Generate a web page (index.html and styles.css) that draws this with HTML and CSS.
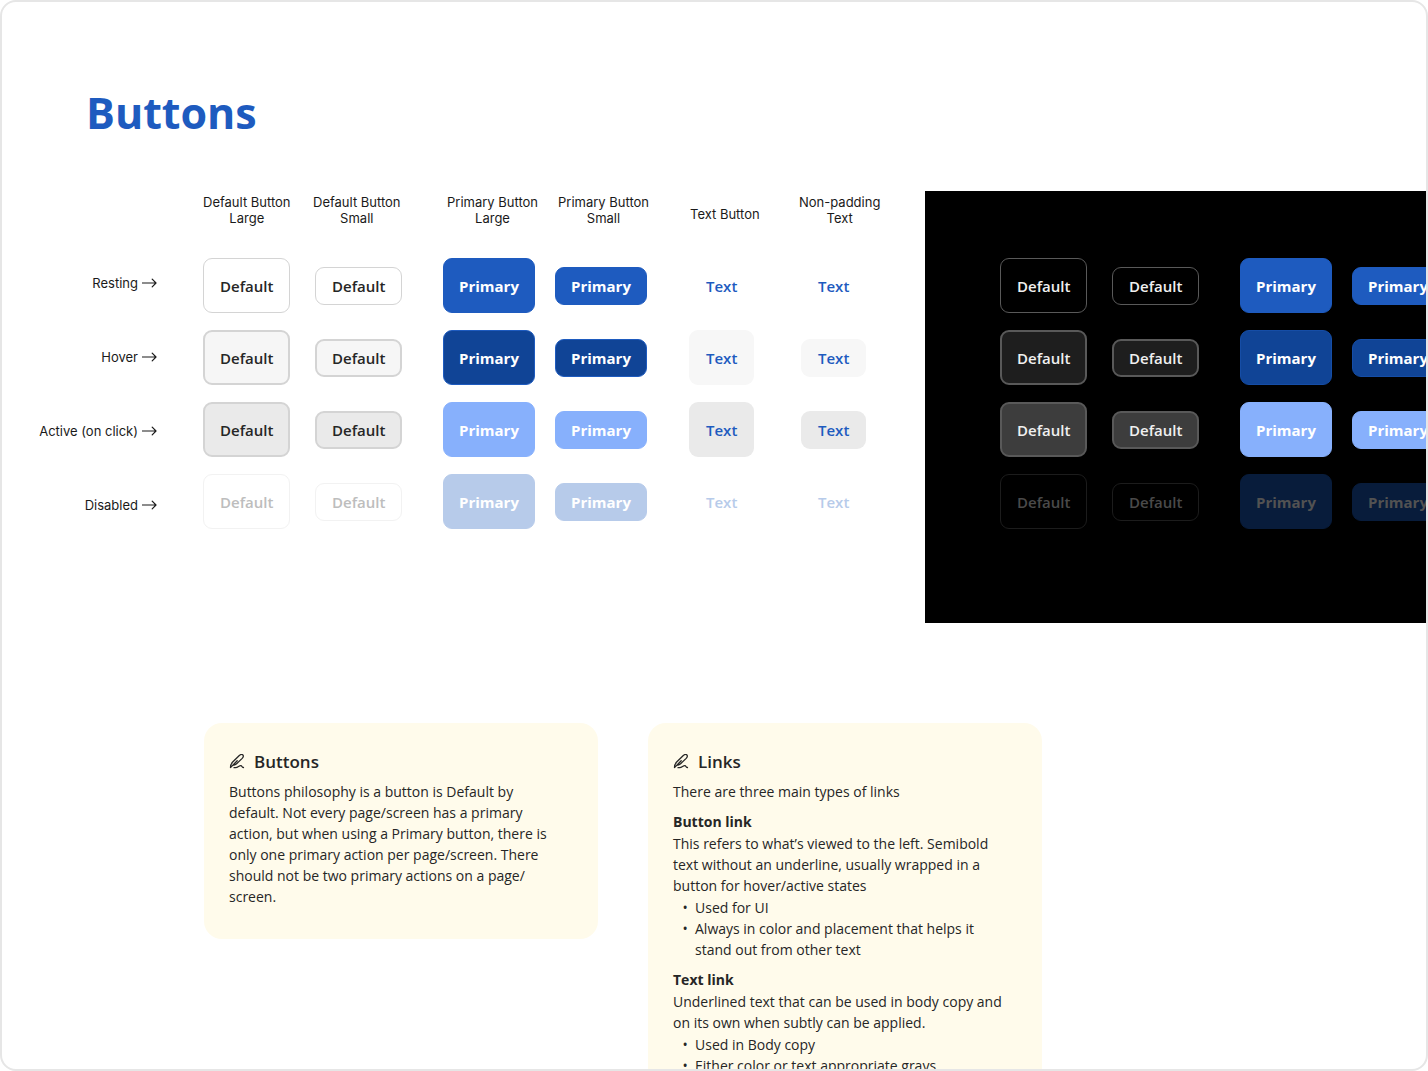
FILE: index.html
```html
<!DOCTYPE html>
<html lang="en">
<head>
<meta charset="utf-8">
<meta name="viewport" content="width=device-width, initial-scale=1">
<title>Buttons</title>
<link rel="stylesheet" href="styles.css">
</head>
<body>
<svg width="0" height="0" class="defs" aria-hidden="true">
  <symbol id="arrow" viewBox="0 0 15 10"><path d="M.5 5h13.500M10.200 1.200 14 5l-3.800 3.800"/></symbol>
  <symbol id="pen" viewBox="0 0 16 16"><path d="M1.500 13.600C1.500 11.400 2.300 9.400 3.900 7.800L10.300 1.500C11.500.5 13.200.3 13.900 1 14.700 1.800 14.300 3.300 13.200 4.400L7.600 9.700C6.300 10.900 4.900 11.300 3.500 11.400M1.500 13.600 8.200 6.700M5 13.700H6.600C9 13.700 9.900 11.600 11.800 11.600 13.300 11.600 12.600 13.700 14.500 13.500"/></symbol>
</svg>
<main class="sheet">
  <h1 class="title">Buttons</h1>

  <section class="board">
    <div class="states">
      <span>Resting <svg class="arrow" aria-hidden="true"><use href="#arrow"/></svg></span>
      <span>Hover <svg class="arrow" aria-hidden="true"><use href="#arrow"/></svg></span>
      <span>Active (on click) <svg class="arrow" aria-hidden="true"><use href="#arrow"/></svg></span>
      <span>Disabled <svg class="arrow" aria-hidden="true"><use href="#arrow"/></svg></span>
    </div>

    <div class="light">
      <div class="heads">
        <span>Default Button<br>Large</span>
        <span>Default Button<br>Small</span>
        <span>Primary Button<br>Large</span>
        <span>Primary Button<br>Small</span>
        <span class="single">Text Button</span>
        <span>Non-padding<br>Text</span>
      </div>
      <div class="matrix">
        <button class="btn default large">Default</button>
        <button class="btn default">Default</button>
        <button class="btn primary large">Primary</button>
        <button class="btn primary">Primary</button>
        <button class="btn text large">Text</button>
        <button class="btn text">Text</button>

        <button class="btn default large is-hover">Default</button>
        <button class="btn default is-hover">Default</button>
        <button class="btn primary large is-hover">Primary</button>
        <button class="btn primary is-hover">Primary</button>
        <button class="btn text large is-hover">Text</button>
        <button class="btn text is-hover">Text</button>

        <button class="btn default large is-active">Default</button>
        <button class="btn default is-active">Default</button>
        <button class="btn primary large is-active">Primary</button>
        <button class="btn primary is-active">Primary</button>
        <button class="btn text large is-active">Text</button>
        <button class="btn text is-active">Text</button>

        <button class="btn default large" disabled>Default</button>
        <button class="btn default" disabled>Default</button>
        <button class="btn primary large" disabled>Primary</button>
        <button class="btn primary" disabled>Primary</button>
        <button class="btn text large" disabled>Text</button>
        <button class="btn text" disabled>Text</button>
      </div>
    </div>

    <div class="dark">
      <div class="matrix">
        <button class="btn default large">Default</button>
        <button class="btn default">Default</button>
        <button class="btn primary large">Primary</button>
        <button class="btn primary">Primary</button>

        <button class="btn default large is-hover">Default</button>
        <button class="btn default is-hover">Default</button>
        <button class="btn primary large is-hover">Primary</button>
        <button class="btn primary is-hover">Primary</button>

        <button class="btn default large is-active">Default</button>
        <button class="btn default is-active">Default</button>
        <button class="btn primary large is-active">Primary</button>
        <button class="btn primary is-active">Primary</button>

        <button class="btn default large" disabled>Default</button>
        <button class="btn default" disabled>Default</button>
        <button class="btn primary large" disabled>Primary</button>
        <button class="btn primary" disabled>Primary</button>
      </div>
    </div>
  </section>

  <section class="notes">
    <article class="note">
      <h2><svg class="pen" aria-hidden="true"><use href="#pen"/></svg>Buttons</h2>
      <p>Buttons philosophy is a button is Default by default. Not every page/screen has a primary action, but when using a Primary button, there is only one primary action per page/screen. There should not be two primary actions on a page/<wbr>screen.</p>
    </article>

    <article class="note">
      <h2><svg class="pen" aria-hidden="true"><use href="#pen"/></svg>Links</h2>
      <p>There are three main types of links</p>
      <h3>Button link</h3>
      <p>This refers to what’s viewed to the left. Semibold text without an underline, usually wrapped in a button for hover/active states</p>
      <ul>
        <li>Used for UI</li>
        <li>Always in color and placement that helps it stand out from other text</li>
      </ul>
      <h3>Text link</h3>
      <p>Underlined text that can be used in body copy and on its own when subtly can be applied.</p>
      <ul>
        <li>Used in Body copy</li>
        <li>Either color or text appropriate grays</li>
      </ul>
    </article>
  </section>
</main>
</body>
</html>
```
FILE: styles.css
```css
* { box-sizing: border-box; }

body {
  margin: 0;
  background: #fff;
  color: #262626;
  font-family: "Open Sans", sans-serif;
  font-size: 14px;
  line-height: 21px;
}

.defs { display: none; }

.sheet {
  height: 100vh;
  overflow: hidden;
  border: 2px solid #e6e6e6;
  border-radius: 16px;
}

.title {
  margin: 81px 0 0 84px;
  color: #1e5bbf;
  font-size: 43px;
  font-weight: 700;
  line-height: 60px;
}

/* Board: state labels, light variants, dark variants */
.board {
  display: flex;
  margin-top: 48px;
}

.states,
.heads {
  color: #1a1a1a;
  font-family: Inter, sans-serif;
  font-size: 13px;
  line-height: 16px;
  white-space: nowrap;
}

.states {
  display: flex;
  flex: none;
  flex-direction: column;
  gap: 58px;
  width: 155px;
  padding-top: 84px;
}

.states span {
  display: flex;
  align-items: center;
  justify-content: flex-end;
  gap: 4px;
}

.arrow {
  width: 15px;
  height: 10px;
}

.arrow,
.pen {
  flex: none;
  fill: none;
  stroke: currentColor;
  stroke-width: 1.2;
  stroke-linecap: round;
  stroke-linejoin: round;
}

.light {
  flex: none;
  width: 768px;
  padding: 3px 0 0 46px;
}

.heads {
  display: grid;
  grid-template-columns: 110px 134px 111px 132px 109px 80px;
  align-items: end;
  justify-items: start;
  text-align: center;
}

.single { line-height: 24px; }

.matrix {
  display: grid;
  grid-template-columns: 112px 128px 112px 134px 112px 66px;
  grid-auto-rows: 55px;
  row-gap: 17px;
  align-items: center;
  justify-items: start;
}

.light .matrix { margin-top: 32px; }

.dark {
  flex: 1 1 0;
  min-width: 0;
  overflow: hidden;
  padding: 67px 0 94px 75px;
  background: #000;
}

.dark .matrix { grid-template-columns: 112px 128px 112px 93px; }

/* Buttons */
.btn {
  height: 38px;
  padding: 0 16px;
  border: 1px solid transparent;
  border-radius: 9px;
  font: 600 15px/20px "Open Sans", sans-serif;
}

.large { height: 55px; }

.default {
  border-color: #d4d4d4;
  background: #fff;
  color: #262626;
}

.default.is-hover,
.default.is-active {
  padding: 0 15px;
  border-width: 2px;
}

.default.is-hover { background: #f6f6f6; }
.default.is-active { background: #eaeaea; }

.default:disabled {
  border-color: #f2f2f2;
  color: #bdbdbd;
}

.primary {
  padding: 0 15px;
  border-color: #1e5bbf;
  background: #1e5bbf;
  color: #fff;
  font-weight: 700;
}

.primary.is-hover { background: #104496; }

.primary.is-active {
  border-color: #87b0fc;
  background: #87b0fc;
}

.primary:disabled {
  border-color: #b7cbea;
  background: #b7cbea;
}

.text {
  background: transparent;
  color: #1e5bbf;
}

.text.is-hover { background: #f7f7f7; }
.text.is-active { background: #eaeaea; }
.text:disabled { color: #b7cbea; }

.dark .default {
  border-color: #595959;
  background: #000;
  color: #f0f0f0;
}

.dark .default.is-hover { background: #1e1e1e; }
.dark .default.is-active { background: #3d3d3d; }

.dark .default:disabled {
  border-color: #1c1c1c;
  color: #4a4a4a;
}

.dark .primary.is-hover { border-color: #154da6; }

.dark .primary:disabled {
  border-color: #081c3b;
  background: #081c3b;
  color: #525252;
}

/* Notes */
.notes {
  display: flex;
  align-items: flex-start;
  gap: 50px;
  margin: 100px 0 0 202px;
}

.note {
  width: 394px;
  padding: 25px 35px 32px 25px;
  border-radius: 18px;
  background: #fffbeb;
}

.note h2 {
  display: flex;
  align-items: center;
  gap: 9px;
  margin: 0 0 6px;
  font-size: 17px;
  font-weight: 600;
  line-height: 27px;
}

.pen {
  width: 16px;
  height: 16px;
  stroke-width: 1.3;
}

.note p { margin: 0; }

.note h3 {
  margin: 9px 0 0;
  font-size: 14px;
  font-weight: 700;
  line-height: 22px;
}

.note ul {
  margin: 1px 0 0;
  padding-left: 22px;
  list-style-type: "•  ";
}
```
